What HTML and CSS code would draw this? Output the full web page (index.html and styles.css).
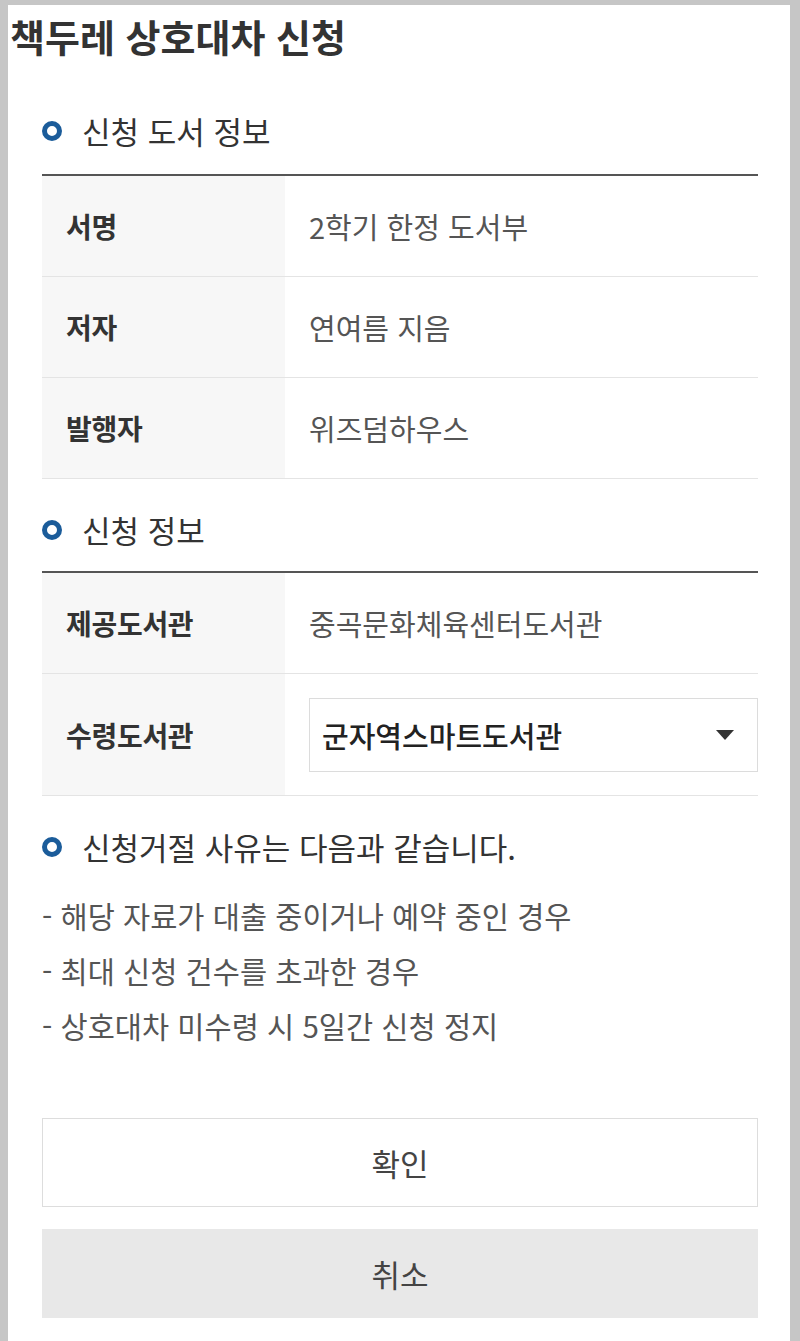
FILE: index.html
```html
<!DOCTYPE html>
<html lang="ko">
<head>
    <meta charset="UTF-8">
    <meta name="viewport" content="width=device-width, initial-scale=1.0"/>
    <title>책두레 상호대차 신청</title>
    <link rel="stylesheet" href="styles.css">
</head>
<body>
<div class="page">
    <h1 class="title">책두레 상호대차 신청</h1>

    <div class="content">
        <h2 class="sec-title first"><span class="ring"></span>신청 도서 정보</h2>
        <table class="info">
            <tr>
                <th>서명</th>
                <td>2학기 한정 도서부</td>
            </tr>
            <tr>
                <th>저자</th>
                <td>연여름 지음</td>
            </tr>
            <tr>
                <th>발행자</th>
                <td>위즈덤하우스</td>
            </tr>
        </table>

        <h2 class="sec-title"><span class="ring"></span>신청 정보</h2>
        <table class="info">
            <tr>
                <th>제공도서관</th>
                <td>중곡문화체육센터도서관</td>
            </tr>
            <tr class="select-row">
                <th>수령도서관</th>
                <td>
                    <div class="select">
                        <span>군자역스마트도서관</span>
                        <svg class="caret" width="20" height="12" viewBox="0 0 20 12"><path d="M1 1h18L10 11z" fill="#333"/></svg>
                    </div>
                </td>
            </tr>
        </table>

        <h2 class="sec-title"><span class="ring"></span>신청거절 사유는 다음과 같습니다.</h2>
        <ul class="reasons">
            <li>- 해당 자료가 대출 중이거나 예약 중인 경우</li>
            <li>- 최대 신청 건수를 초과한 경우</li>
            <li>- 상호대차 미수령 시 5일간 신청 정지</li>
        </ul>

        <div class="buttons">
            <button class="btn btn-ok">확인</button>
            <button class="btn btn-cancel">취소</button>
        </div>
    </div>
</div>
</body>
</html>
```

FILE: styles.css
```css
body {
    margin: 0;
    background: #c6c6c6;
    font-family: "Noto Sans CJK KR", "Noto Sans", sans-serif;
    color: #333;
}

.page {
    margin: 5px 10px 0 8px;
    background: #fff;
    min-height: 1336px;
}

.title {
    margin: 0;
    padding: 6px 0 0 2px;
    font-size: 38px;
    font-weight: 700;
    line-height: 50px;
    color: #333;
}

.content {
    padding: 0 32px 0 34px;
}

.sec-title {
    display: flex;
    align-items: center;
    margin: 0;
    padding: 31px 0 21px;
    font-size: 31px;
    font-weight: 400;
    line-height: 40px;
    color: #333;
}

.sec-title.first {
    padding: 50px 0 23px;
}

.ring {
    display: inline-block;
    width: 10px;
    height: 10px;
    border: 5px solid #1b5c9a;
    border-radius: 50%;
    margin-right: 20px;
}

.info {
    width: 100%;
    border-collapse: collapse;
    border-top: 2px solid #555;
}

.info th,
.info td {
    height: 100px;
    border-bottom: 1px solid #e4e4e4;
    font-size: 28px;
    text-align: left;
    padding: 0 0 0 24px;
}

.info th {
    width: 219px;
    background: #f7f7f7;
    font-weight: 700;
    color: #333;
    letter-spacing: -0.3px;
}

.info td {
    color: #555;
    font-size: 29px;
}

.select-row th,
.select-row td {
    height: 121px;
}

.select {
    display: flex;
    align-items: center;
    justify-content: space-between;
    height: 72px;
    border: 1px solid #dcdcdc;
    padding: 0 22px 0 12px;
    font-size: 29px;
    font-weight: 500;
    color: #222;
}

.reasons {
    list-style: none;
    margin: 0;
    padding: 0;
}

.reasons li {
    font-size: 29.5px;
    line-height: 55px;
    color: #555;
}

.buttons {
    display: flex;
    flex-direction: column;
    gap: 22px;
    padding-top: 65px;
}

.btn {
    height: 89px;
    font-family: inherit;
    font-size: 31px;
    color: #444;
    border: 1px solid #ddd;
    background: #fff;
}

.btn-cancel {
    background: #e8e8e8;
    border-color: #e8e8e8;
}
```
